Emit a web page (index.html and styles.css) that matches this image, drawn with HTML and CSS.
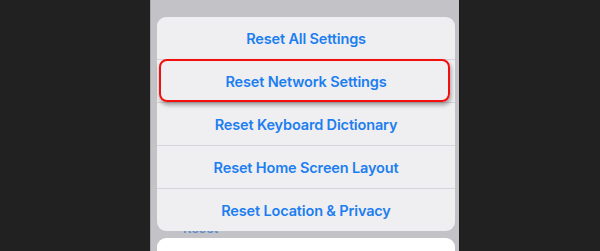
FILE: index.html
```html
<!DOCTYPE html>
<html>
<head>
<meta charset="utf-8">
<link rel="stylesheet" href="styles.css">
</head>
<body>
<div class="stage">
  <div class="side"></div>
  <div class="phone">
    <div class="sheet">
      <div class="row">Reset All Settings</div>
      <div class="row">Reset Network Settings</div>
      <div class="row">Reset Keyboard Dictionary</div>
      <div class="row">Reset Home Screen Layout</div>
      <div class="row">Reset Location &amp; Privacy</div>
      <div class="highlight"></div>
    </div>
    <div class="peek">Reset</div>
    <div class="cancel"></div>
  </div>
  <div class="side"></div>
</div>
</body>
</html>
```
FILE: styles.css
```css
html, body {
  margin: 0;
  padding: 0;
  background: #212121;
  height: 251px;
  overflow: hidden;
}
.stage {
  display: flex;
  height: 251px;
}
.side {
  flex: 1;
  background: #212121;
}
.side:first-child {
  flex: 0 0 150px;
}
.phone {
  box-sizing: border-box;
  flex: 0 0 310px;
  background: #c3c3c7;
  border-left: 1px solid #a9a9ad;
  border-right: 1px solid #1a1a1a;
  padding: 17px 4px 0 6px;
  display: flex;
  flex-direction: column;
}
.sheet {
  position: relative;
  z-index: 1;
  background: #efeff1;
  border-radius: 9px;
  display: flex;
  flex-direction: column;
}
.row {
  height: 42px;
  display: flex;
  align-items: center;
  justify-content: center;
  font-family: Inter, "Noto Sans", sans-serif;
  font-weight: 600;
  font-size: 14.5px;
  letter-spacing: -0.15px;
  color: #1c7ef0;
}
.row + .row {
  border-top: 1px solid #d6d6da;
}
.highlight {
  position: absolute;
  left: 2px;
  right: 5px;
  top: 42px;
  height: 43px;
  box-sizing: border-box;
  border: 2.5px solid #f40f0f;
  border-radius: 8px;
  box-shadow: 1px 3px 4px rgba(0, 0, 0, 0.35);
}
.peek {
  margin-top: -11px;
  padding-left: 26px;
  height: 18px;
  font-family: Inter, "Noto Sans", sans-serif;
  font-weight: 600;
  font-size: 13px;
  color: #4f82cc;
  opacity: 0.85;
}
.cancel {
  background: #ffffff;
  border-radius: 9px 9px 0 0;
  flex: 1;
}
```
